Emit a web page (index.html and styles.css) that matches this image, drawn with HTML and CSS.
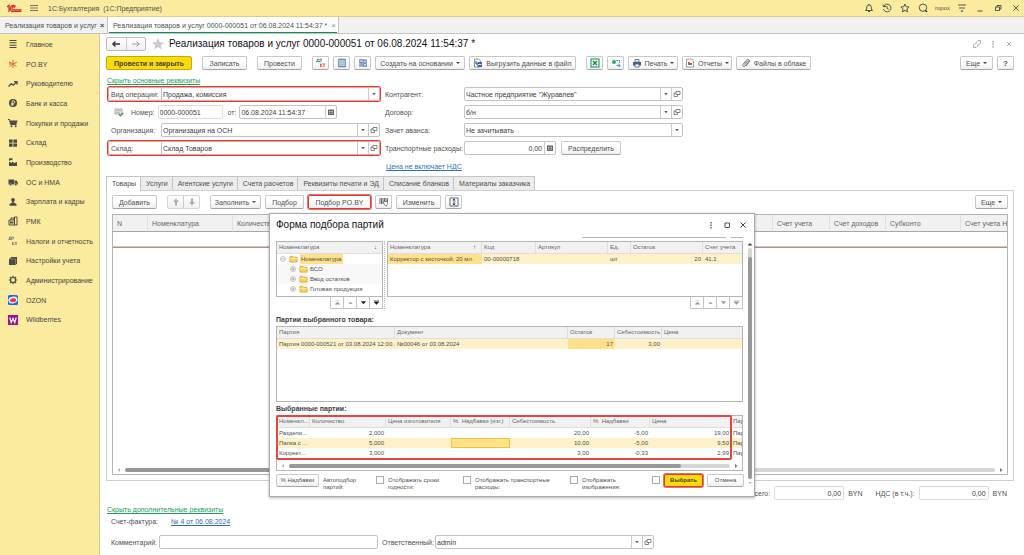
FILE: index.html
```html
<!DOCTYPE html>
<html lang="ru">
<head>
<meta charset="utf-8">
<title>1С:Бухгалтерия</title>
<link rel="stylesheet" href="styles.css">
</head>
<body>
<svg class="defs" aria-hidden="true">
  <symbol id="open" viewBox="0 0 8 8"><path d="M3 1.500h4v3H3zM3 3H1v3.500h3.500V4.500" fill="none" stroke="#666" stroke-width=".8"/></symbol>
  <symbol id="down" viewBox="0 0 8 8"><path d="M2.300 3h3.400L4 5.200z" fill="#555"/></symbol>
  <symbol id="cal" viewBox="0 0 8 8"><path d="M1 1.500h6V7H1z" fill="#666"/><path d="M2 3.500h4M2 5.200h4" stroke="#fff" stroke-width=".7" stroke-dasharray="1 .5"/></symbol>
  <symbol id="folder" viewBox="0 0 10 9"><path d="M1 1.500h3l1 1h4V8H1z" fill="#ffd35c" stroke="#d79b26" stroke-width=".8"/><path d="M1.500 4h7" stroke="#fff0b0" stroke-width="1"/></symbol>
  <symbol id="plus" viewBox="0 0 8 8"><circle cx="4" cy="4" r="2.500" fill="#fff" stroke="#aaa" stroke-width=".7"/><path d="M2.500 4h3M4 2.500v3" stroke="#888" stroke-width=".7"/></symbol>
  <symbol id="minus" viewBox="0 0 8 8"><circle cx="4" cy="4" r="2.500" fill="#fff" stroke="#aaa" stroke-width=".7"/><path d="M2.500 4h3" stroke="#888" stroke-width=".7"/></symbol>
  <symbol id="first" viewBox="0 0 8 8"><path d="M1.500 2h5M1.500 6L4 3.500 6.500 6z" fill="currentColor" stroke="currentColor" stroke-width=".6"/></symbol>
  <symbol id="up" viewBox="0 0 8 8"><path d="M1.500 5.500L4 3l2.500 2.500z" fill="currentColor"/></symbol>
  <symbol id="next" viewBox="0 0 8 8"><path d="M1 2.500h6L4 6z" fill="currentColor"/></symbol>
  <symbol id="last" viewBox="0 0 8 8"><path d="M1 2.200h6M1.500 3.500h5L4 6.200z" fill="currentColor" stroke="currentColor" stroke-width=".8"/></symbol>
  <symbol id="left" viewBox="0 0 8 8"><path d="M5 2v4L2.500 4z" fill="#bbb"/></symbol>
  <symbol id="right" viewBox="0 0 8 8"><path d="M3 2v4l2.500-2z" fill="currentColor"/></symbol>
</svg>

<header class="topbar">
  <svg class="logo" viewBox="0 0 17 9"><g fill="none" stroke="#dc2f26" stroke-width="1.300"><path d="M1 3l2-1.600V8M9.500 2.500A3 3 0 1 0 8 7.400h7.500M8.800 3.600a1.500 1.500 0 1 0-1 2.200h7.700"/></g></svg>
  <button class="plain" aria-label="Меню"><svg class="ic10" viewBox="0 0 10 10"><path d="M1 2.500h8M1 5h8M1 7.500h8" stroke="#555" stroke-width=".8"/></svg></button>
  <span class="app-name">1С:Бухгалтерия&nbsp; (1С:Предприятие)</span>
  <nav class="top-icons">
    <button class="plain" aria-label="Уведомления"><svg class="ic10" viewBox="0 0 10 10"><path d="M1.500 7.500h7L7.300 6V4.200a2.300 2.300 0 0 0-4.600 0V6zM4 8.500h2M5 1v1" fill="none" stroke="#444" stroke-width=".9"/></svg></button>
    <button class="plain" aria-label="История"><svg class="ic10" viewBox="0 0 10 10"><path d="M1.700 3.500A3.800 3.800 0 1 1 1.500 6M1 1.500l.6 2.200L4 3.500M5 3v2.300l1.700 1" fill="none" stroke="#444" stroke-width=".9"/></svg></button>
    <button class="plain" aria-label="Избранное"><svg class="ic10" viewBox="0 0 10 10"><path d="M5 1l1.200 2.700 2.900.3-2.200 2 .7 2.900L5 7.400 2.400 8.900 3.100 6 .9 4l2.900-.3z" fill="none" stroke="#444" stroke-width=".9"/></svg></button>
    <button class="plain" aria-label="Поиск"><svg class="ic10" viewBox="0 0 10 10"><circle cx="5" cy="4.700" r="3.700" fill="none" stroke="#444" stroke-width=".9"/><path d="M7.200 7.200L9 9" stroke="#333" stroke-width="1.400"/></svg></button>
    <span class="user">ropox</span>
    <button class="plain" aria-label="Настройки"><svg class="ic10" viewBox="0 0 10 10"><path d="M1 2h8M2 5h6" stroke="#444" stroke-width=".9"/><path d="M3.500 7.500h3L5 9.200z" fill="#444"/></svg></button>
    <button class="plain" aria-label="Свернуть"><svg class="ic10" viewBox="0 0 10 10"><path d="M2.500 8h5" stroke="#444"/></svg></button>
    <button class="plain" aria-label="Восстановить"><svg class="ic10" viewBox="0 0 10 10"><path d="M2.500 4h4v3.500h-4zM4 4V2.500h4V6H6.500" fill="none" stroke="#444" stroke-width=".9"/></svg></button>
    <button class="plain" aria-label="Закрыть"><svg class="ic10" viewBox="0 0 10 10"><path d="M2.500 2.500l5 5m0-5l-5 5" stroke="#444" stroke-width=".9"/></svg></button>
  </nav>
</header>

<div class="open-tabs">
  <button class="wtab first">Реализация товаров и услуг <b>×</b></button>
  <button class="wtab active"><span>Реализация товаров и услуг 0000-000051 от 06.08.2024 11:54:37 * <i>×</i></span></button>
</div>

<div class="body">
<nav class="sidebar">
  <a href="#"><svg viewBox="0 0 10 10"><path d="M1.500 1.500h7M1.500 3.800h7M1.500 6.200h7M1.500 8.500h7" stroke="#4a4a4a" stroke-width="1.100"/></svg>Главное</a>
  <a href="#"><svg viewBox="0 0 10 10"><path d="M5 1v3M5 6v3M1 3l3 1.500M6 4.500L9 3M1.500 7.500L4 5.800M6 5.800l2.500 1.700M1 5h2" stroke="#e8602c" stroke-width="1"/><circle cx="5" cy="5" r="1" fill="#e8402c"/></svg>PO.BY</a>
  <a href="#"><svg viewBox="0 0 10 10"><path d="M.5 7.500l2.800-2.800 2 1.500L8.500 3M6 2.600h3v3" fill="none" stroke="#4a4a4a" stroke-width="1.300"/></svg>Руководителю</a>
  <a href="#"><svg viewBox="0 0 10 10"><circle cx="5" cy="5" r="4" fill="#4a4a4a"/><path d="M4.200 8V2.800h1.300a1.200 1.200 0 0 1 0 2.600H3.200M3.200 6.600h2.500" fill="none" stroke="#fbeb9e" stroke-width=".9"/></svg>Банк и касса</a>
  <a href="#"><svg viewBox="0 0 10 10"><path d="M0 1.500h1.500l1 5H8.500" fill="none" stroke="#4a4a4a"/><path d="M2 2.500h7.500L8.500 6h-6z" fill="#4a4a4a"/><circle cx="3.500" cy="8.300" r="1" fill="#4a4a4a"/><circle cx="7.700" cy="8.300" r="1" fill="#4a4a4a"/></svg>Покупки и продажи</a>
  <a href="#"><svg viewBox="0 0 10 10"><path d="M1 1.500h3.600v3.200H1zM5.400 1.500H9v3.200H5.400zM1 5.500h3.600v3.200H1zM5.400 5.500H9v3.200H5.400z" fill="#4a4a4a"/></svg>Склад</a>
  <a href="#"><svg viewBox="0 0 10 10"><path d="M1 9V4.500L4 6V4.500L6.500 6 9 5v4zM1 1.300h3.500v1.500L1 3.800z" fill="#4a4a4a"/></svg>Производство</a>
  <a href="#"><svg viewBox="0 0 10 10"><path d="M.5 2.500H6v5H.5zM6.500 3.500h2l1.300 2v2H6.500z" fill="#4a4a4a"/><circle cx="2.500" cy="7.700" r="1.100" fill="#4a4a4a" stroke="#fbeb9e" stroke-width=".4"/><circle cx="7.800" cy="7.700" r="1.100" fill="#4a4a4a" stroke="#fbeb9e" stroke-width=".4"/></svg>ОС и НМА</a>
  <a href="#"><svg viewBox="0 0 10 10"><circle cx="5" cy="2.800" r="1.900" fill="#4a4a4a"/><path d="M4.200 4h1.600v1.500L8.500 7v1.800h-7V7l2.700-1.500z" fill="#4a4a4a"/></svg>Зарплата и кадры</a>
  <a href="#"><svg viewBox="0 0 10 10"><path d="M1 4h5.500v5H1zM3 4V2h3v2M6.500 5V1H9v8H6.500" fill="none" stroke="#4a4a4a"/><path d="M2 5.500h3.500v2H2z" fill="#4a4a4a"/></svg>РМК</a>
  <a href="#"><svg viewBox="0 0 10 10"><path d="M.8 4V3.300h3V4M1.500 3V1h1.800v2M4 1.300h2M5 1.300v2M4.500 6v3M6.500 6L5 7.500 6.500 9M7 6.800h2M8 6.800V9" fill="none" stroke="#666" stroke-width=".8"/></svg>Налоги и отчетность</a>
  <a href="#"><svg viewBox="0 0 10 10"><path d="M3.500 1H9v6.500L7.500 9H1V3z" fill="#4a4a4a"/><path d="M1.500 3h6v5.500" fill="none" stroke="#bfb27a" stroke-width=".5"/></svg>Настройки учета</a>
  <a href="#"><svg viewBox="0 0 10 10"><circle cx="5" cy="5" r="2.500" fill="none" stroke="#4a4a4a" stroke-width="1.200"/><path d="M5 .8v1.700M5 7.500v1.700M.8 5h1.700M7.500 5h1.700M2 2l1.200 1.200M6.800 6.800L8 8M8 2L6.800 3.200M3.200 6.800L2 8" stroke="#4a4a4a" stroke-width="1.200"/></svg>Администрирование</a>
  <a href="#"><svg viewBox="0 0 10 10"><rect width="10" height="10" rx="1.500" fill="#1769ef"/><ellipse cx="5" cy="5" rx="4.600" ry="3.300" fill="#fff" transform="rotate(-15 5 5)"/><ellipse cx="5" cy="5.200" rx="3.200" ry="2" fill="#ee3a3d" transform="rotate(-10 5 5)"/></svg>OZON</a>
  <a href="#"><svg viewBox="0 0 10 10"><rect width="10" height="10" fill="#97158f"/><path d="M1.800 2.500l1.400 5L5 3.500l1.800 4 1.400-5" fill="none" stroke="#fff" stroke-width="1.200"/></svg>Wildberries</a>
</nav>

<main class="main">
  <div class="title-row">
    <div class="split"><button aria-label="Назад"><svg class="ic10" viewBox="0 0 10 10"><path d="M1.500 5H9M4.500 2.500L1.800 5l2.700 2.500" fill="none" stroke="#333" stroke-width="1.300"/></svg></button><button aria-label="Вперед"><svg class="ic10" viewBox="0 0 10 10"><path d="M1 5h7.500M5.500 2.500L8.200 5 5.500 7.500" fill="none" stroke="#999" stroke-width="1"/></svg></button></div>
    <svg class="star" viewBox="0 0 12 12"><path d="M6 0l1.600 4.100 4.400.3-3.400 2.800 1.100 4.300L6 9.100l-3.700 2.400 1.100-4.300L0 4.400l4.400-.3z" fill="#c9c9c9"/></svg>
    <h1>Реализация товаров и услуг 0000-000051 от 06.08.2024 11:54:37 *</h1>
    <div class="title-tools">
      <svg class="ic10" viewBox="0 0 10 10"><path d="M4 3.500L6 1.500h2.500V4l-2 2H5M6 6.500l-2 2H1.500V6l2-2H5" fill="none" stroke="#999" stroke-width=".8"/></svg>
      <svg class="ic10" viewBox="0 0 10 10"><path d="M5 2v1.500M5 4.500V6M5 7v1.500" stroke="#888" stroke-width="1.200"/></svg>
      <svg class="ic10" viewBox="0 0 10 10"><path d="M3 3l4 4m0-4L3 7" stroke="#999" stroke-width=".8"/></svg>
    </div>
  </div>

  <div class="toolbar">
    <button class="btn primary w86">Провести и закрыть</button>
    <button class="btn w45">Записать</button>
    <button class="btn w45">Провести</button>
    <div class="group">
      <button class="btn sq" aria-label="Дт/Кт"><svg class="ic10" viewBox="0 0 10 10"><path d="M.5 4.500v-1h3.300v1M1.300 3.300V1.200h1.800v2.100M4 1.200h2M5 1.200v3" fill="none" stroke="#1f9a5b" stroke-width=".8"/><path d="M4.500 5.500V9M6.500 5.500L5 7.200 6.500 9M7 6h2M8 6v3" fill="none" stroke="#e0433a" stroke-width=".8"/></svg></button>
      <button class="btn sq" aria-label="Реестр"><svg class="ic10" viewBox="0 0 10 10"><path d="M1.500 1h7v8h-7z" fill="#7f9dc9" stroke="#5b79a8" stroke-width=".6"/><path d="M2 3h6M2 5h6M2 7h6" stroke="#fff" stroke-width=".8"/></svg></button>
      <button class="btn sq" aria-label="Структура"><svg class="ic10" viewBox="0 0 10 10"><path d="M1 1h8v8H1z" fill="#9bb3d4"/><path d="M2 2h3v2.500H2zM5.500 5.500h2.800V8H5.500zM3.500 4.500v2.500h2" fill="#dfe8f4" stroke="#4a6a9a" stroke-width=".6"/></svg></button>
    </div>
    <button class="btn w90 near">Создать на основании <em></em></button>
    <button class="btn w107 near"><svg class="ic10" viewBox="0 0 10 10"><path d="M1.500 1h4l2 2v6h-6z" fill="#fff" stroke="#666" stroke-width=".7"/><path d="M4.500 4h4.500v5H4.500z" fill="#376aa8"/><path d="M3 3v3h3" fill="none" stroke="#27466d"/><path d="M5 6.500h3.500" stroke="#fff" stroke-width=".8"/></svg>Выгрузить данные в файл</button>
    <div class="group">
      <button class="btn sq" aria-label="Excel"><svg class="ic10" viewBox="0 0 10 10"><rect x="1" y="1" width="8" height="8" fill="#fff" stroke="#27a065" stroke-width="1.200"/><path d="M3 3l4 4m0-4L3 7" stroke="#167f48" stroke-width="1.400"/></svg></button>
      <button class="btn sq" aria-label="Обмен"><svg class="ic10" viewBox="0 0 10 10"><circle cx="3" cy="4" r="2" fill="#26a869"/><path d="M5.500 2.500h3V5M9 7.500H5" fill="none" stroke="#3d83ce" stroke-width="1.200" stroke-dasharray="1.500 .5"/><path d="M7.500 5.500v4L9.700 7.500z" fill="#3d83ce"/></svg></button>
      <button class="btn w50"><svg class="ic10" viewBox="0 0 10 10"><path d="M3 1.500h4V4H3z" fill="#fff" stroke="#47617f" stroke-width=".8"/><path d="M1 4h8v3.500H1z" fill="#47617f"/><path d="M3 6h4v3H3z" fill="#fff" stroke="#47617f" stroke-width=".8"/></svg>Печать <em></em></button>
      <button class="btn w50"><svg class="ic10" viewBox="0 0 10 10"><path d="M1.500 1h5l2 2v6h-7z" fill="#fff" stroke="#777" stroke-width=".7"/><path d="M3 4h2v3H3z" fill="#e04b3f"/><path d="M5 5h2v2H5z" fill="#27a065"/></svg>Отчеты <em></em></button>
      <button class="btn w75"><svg class="ic10" viewBox="0 0 10 10"><path d="M3.500 6.500l3-3.500c.8-.8 1.600 0 1 .8L4 8C2.800 9.200 1 8 2 6.500L5.500 2C7 .5 9.500 2 8.200 4L5 8" fill="none" stroke="#555" stroke-width=".8"/></svg>Файлы в облаке</button>
    </div>
    <div class="group end">
      <button class="btn w33">Еще <em></em></button>
      <button class="btn sq q">?</button>
    </div>
  </div>

  <a class="green toggle" href="#">Скрыть основные реквизиты</a>

  <form class="form">
    <div class="col-l">
      <div class="frow hot"><label for="op">Вид операции:</label><div class="field"><input id="op" value="Продажа, комиссия"><button type="button" aria-label="Выбрать"><svg><use href="#down"/></svg></button></div></div>
      <div class="frow num">
        <svg class="ic10" viewBox="0 0 10 10"><path d="M1 2h7v5H1z" fill="#eee" stroke="#888" stroke-width=".7"/><path d="M2 3.700h5M2 5.300h4" stroke="#888" stroke-width=".6"/><path d="M5 7l1.500 1.800L9.300 6" fill="none" stroke="#27a045" stroke-width="1.200"/></svg>
        <label for="num">Номер:</label><div class="field soft w65"><input id="num" value="0000-000051"></div>
        <label for="date">от:</label><div class="field w98"><input id="date" value="06.08.2024 11:54:37"><button type="button" aria-label="Календарь"><svg><use href="#cal"/></svg></button></div>
      </div>
      <div class="frow"><label for="org">Организация:</label><div class="field"><input id="org" value="Организация на ОСН"><button type="button" aria-label="Выбрать"><svg><use href="#down"/></svg></button><button type="button" aria-label="Открыть"><svg><use href="#open"/></svg></button></div></div>
      <div class="frow hot"><label for="wh">Склад:</label><div class="field"><input id="wh" value="Склад Товаров"><button type="button" aria-label="Выбрать"><svg><use href="#down"/></svg></button><button type="button" aria-label="Открыть"><svg><use href="#open"/></svg></button></div></div>
    </div>
    <div class="col-r">
      <div class="frow"><label for="kon">Контрагент:</label><div class="field"><input id="kon" value="Частное предприятие &quot;Журавлев&quot;"><button type="button" aria-label="Выбрать"><svg><use href="#down"/></svg></button><button type="button" aria-label="Открыть"><svg><use href="#open"/></svg></button></div></div>
      <div class="frow"><label for="dog">Договор:</label><div class="field"><input id="dog" value="б/н"><button type="button" aria-label="Выбрать"><svg><use href="#down"/></svg></button><button type="button" aria-label="Открыть"><svg><use href="#open"/></svg></button></div></div>
      <div class="frow"><label for="av">Зачет аванса:</label><div class="field"><input id="av" value="Не зачитывать"><button type="button" aria-label="Выбрать"><svg><use href="#down"/></svg></button></div></div>
      <div class="frow"><label for="tr">Транспортные расходы:</label><div class="field w92"><input id="tr" class="r" value="0,00"><button type="button" aria-label="Калькулятор"><svg><use href="#cal"/></svg></button></div><button type="button" class="btn w60">Распределить</button></div>
    </div>
  </form>
  <a class="blue price" href="#">Цена не включает НДС</a>

  <div class="tabs" role="tablist">
    <button role="tab" class="on">Товары</button><button role="tab">Услуги</button><button role="tab">Агентские услуги</button><button role="tab">Счета расчетов</button><button role="tab">Реквизиты печати и ЭД</button><button role="tab">Списание бланков</button><button role="tab">Материалы заказчика</button>
  </div>
  <section class="panel">
    <div class="toolbar inner">
      <button class="btn w45">Добавить</button>
      <div class="split pale"><button aria-label="Вверх"><svg class="ic10" viewBox="0 0 10 10"><path d="M5 1.500L8 5H6v3.500H4V5H2z" fill="#a5afb8"/></svg></button><button aria-label="Вниз"><svg class="ic10" viewBox="0 0 10 10"><path d="M5 8.500L2 5h2V1.500h2V5h2z" fill="#a5afb8"/></svg></button></div>
      <div class="group">
        <button class="btn w51">Заполнить <em></em></button>
        <button class="btn w39">Подбор</button>
        <button class="btn w63 redbox">Подбор PO.BY</button>
        <button class="btn sq" aria-label="Сканер"><svg class="ic10" viewBox="0 0 10 10"><path d="M1 1v6M2.500 1v6M4 1v6M5.500 1v4M7 1v4M8.500 1v4" stroke="#444" stroke-width=".8"/><path d="M4 5l4.500-1v2.500L7.500 9 6 8.500z" fill="#fff" stroke="#555" stroke-width=".7"/></svg></button>
        <button class="btn w45">Изменить</button>
        <button class="btn sq" aria-label="Высота строк"><svg class="ic10" viewBox="0 0 10 10"><path d="M1 1h8v8H1z" fill="#fff" stroke="#44556b" stroke-width=".9"/><path d="M5 2v6M3.800 3.400L5 2l1.200 1.400M3.800 6.600L5 8l1.200-1.400" fill="none" stroke="#22354d" stroke-width=".9"/></svg></button>
      </div>
      <div class="group end"><button class="btn w33">Еще <em></em></button></div>
    </div>
    <div class="grid-box">
      <table class="grid">
        <colgroup><col class="c35"><col class="c85"><col><col class="c57"><col class="c56"><col class="c75"><col class="c46"></colgroup>
        <thead><tr><th>N</th><th>Номенклатура</th><th>Количество</th><th>Счет учета</th><th>Счет доходов</th><th>Субконто</th><th>Счет учета НДС</th></tr></thead>
        <tbody><tr><td colspan="7"></td></tr></tbody>
      </table>
      <div class="hscroll big"><svg><use href="#left"/></svg><div class="track"><div class="thumb"></div></div><svg><use href="#right"/></svg></div>
    </div>
  </section>

  <div class="totals">
    <label for="t1">Всего:</label><div class="field soft w70"><input id="t1" class="r" value="0,00"></div><span>BYN</span>
    <label for="t2" class="nds">НДС (в т.ч.):</label><div class="field soft w70"><input id="t2" class="r" value="0,00"></div><span>BYN</span>
  </div>
  <a class="green toggle2" href="#">Скрыть дополнительные реквизиты</a>
  <div class="invoice"><span>Счет-фактура:</span><a class="blue" href="#">№ 4 от 06.08.2024</a></div>
  <div class="comment"><label for="cm">Комментарий:</label><div class="field w219"><input id="cm"></div><label for="rs" class="resp">Ответственный:</label><div class="field w219"><input id="rs" value="admin"><button aria-label="Выбрать"><svg><use href="#down"/></svg></button><button aria-label="Открыть"><svg><use href="#open"/></svg></button></div></div>
</main>
</div>

<div class="dialog" role="dialog" aria-labelledby="dt">
  <div class="dlg-head">
    <h2 id="dt">Форма подбора партий</h2>
    <button class="plain" aria-label="Еще"><svg class="ic10" viewBox="0 0 10 10"><path d="M5 2v1.500M5 4.500V6M5 7v1.500" stroke="#444" stroke-width="1.200"/></svg></button>
    <button class="plain" aria-label="Развернуть"><svg class="ic10" viewBox="0 0 10 10"><path d="M3 3h4.500v4.500H3z" fill="none" stroke="#444" stroke-width=".9"/></svg></button>
    <button class="plain" aria-label="Закрыть"><svg class="ic10" viewBox="0 0 10 10"><path d="M2.500 2.500l5 5m0-5l-5 5" stroke="#444"/></svg></button>
  </div>
  <div class="dlg-body">
    <div class="dlg-content">
      <div class="cutoff"><i class="long"></i><i class="short"></i></div>
      <div class="panes">
        <div class="pane tree-pane">
          <div class="list">
            <table><thead><tr><th>Номенклатура<span class="sort">↓</span></th></tr></thead>
            <tbody>
              <tr><td class="t0"><div><svg><use href="#minus"/></svg><svg class="f"><use href="#folder"/></svg><mark>Номенклатура</mark></div></td></tr>
              <tr class="alt"><td class="t1"><div><svg><use href="#plus"/></svg><svg class="f"><use href="#folder"/></svg>БСО</div></td></tr>
              <tr class="alt"><td class="t1"><div><svg><use href="#plus"/></svg><svg class="f"><use href="#folder"/></svg>Ввод остатков</div></td></tr>
              <tr><td class="t1"><div><svg><use href="#plus"/></svg><svg class="f"><use href="#folder"/></svg>Готовая продукция</div></td></tr>
              <tr><td class="t1"><div><svg><use href="#plus"/></svg><svg class="f"><use href="#folder"/></svg></div></td></tr>
            </tbody></table>
          </div>
          <div class="pager"><button disabled aria-label="В начало"><svg><use href="#first"/></svg></button><button disabled aria-label="Вверх"><svg><use href="#up"/></svg></button><button aria-label="Вниз"><svg><use href="#next"/></svg></button><button aria-label="В конец"><svg><use href="#last"/></svg></button></div>
        </div>
        <div class="splitter"></div>
        <div class="pane goods-pane">
          <div class="list">
            <table><colgroup><col class="c94"><col class="c54"><col class="c72"><col class="c23"><col class="c72"><col></colgroup>
            <thead><tr><th>Номенклатура<span class="sort">↑</span></th><th>Код</th><th>Артикул</th><th>Ед.</th><th>Остаток</th><th>Счет учета</th></tr></thead>
            <tbody><tr class="sel"><td class="cur">Корректор с кисточкой, 20 мл.</td><td>00-00000718</td><td></td><td>шт</td><td class="r">20</td><td>41.1</td></tr></tbody></table>
          </div>
          <div class="pager"><button disabled aria-label="В начало"><svg><use href="#first"/></svg></button><button disabled aria-label="Вверх"><svg><use href="#up"/></svg></button><button disabled aria-label="Вниз"><svg><use href="#next"/></svg></button><button disabled aria-label="В конец"><svg><use href="#last"/></svg></button></div>
        </div>
      </div>
      <h3>Партии выбранного товара:</h3>
      <div class="list parts">
        <table><colgroup><col class="c118"><col class="c173"><col class="c47"><col class="c47"><col></colgroup>
        <thead><tr><th>Партия</th><th>Документ</th><th>Остаток</th><th>Себестоимость</th><th>Цена</th></tr></thead>
        <tbody><tr class="sel"><td>Партия 0000-000521 от 03.08.2024 12:00...</td><td>№00046 от 03.08.2024</td><td class="r cur">17</td><td class="r">3,00</td><td></td></tr></tbody></table>
      </div>
      <h3>Выбранные партии:</h3>
      <div class="list chosen">
        <table><colgroup><col class="c33"><col class="c76"><col class="c65"><col class="c59"><col class="c81"><col class="c59"><col class="c81"><col></colgroup>
        <thead><tr><th>Номенкл...</th><th>Количество</th><th>Цена изготовителя</th><th>%&nbsp; Надбавки (изг.)</th><th>Себестоимость</th><th>%&nbsp; Надбавки</th><th>Цена</th><th>Пар</th></tr></thead>
        <tbody>
          <tr><td>Раздели...</td><td class="r">2,000</td><td></td><td></td><td class="r">20,00</td><td class="r">-5,00</td><td class="r">19,00</td><td>Пар</td></tr>
          <tr class="sel"><td>Папка с ...</td><td class="r">5,000</td><td></td><td class="edit"></td><td class="r">10,00</td><td class="r">-5,00</td><td class="r">9,50</td><td>Пар</td></tr>
          <tr><td>Коррект...</td><td class="r">3,000</td><td></td><td></td><td class="r">3,00</td><td class="r">-0,33</td><td class="r">2,99</td><td>Пар</td></tr>
        </tbody></table>
        <div class="hscroll"><svg><use href="#left"/></svg><div class="track"><div class="thumb"></div></div><svg><use href="#right"/></svg></div>
        <div class="frame"></div>
      </div>
      <div class="dlg-foot">
        <button class="btn w43">% Надбавки</button>
        <label class="l49" for="k1">Автоподбор партий:</label><input type="checkbox" id="k1">
        <label class="l71" for="k2">Отображать сроки годности:</label><input type="checkbox" id="k2">
        <label class="l91" for="k3">Отображать транспортные расходы:</label><input type="checkbox" id="k3">
        <label class="l66" for="k4">Отображать изображения:</label><input type="checkbox" id="k4">
        <button class="btn primary redbox w39">Выбрать</button>
        <button class="btn w37">Отмена</button>
      </div>
    </div>
    <div class="vscroll"><svg><use href="#up"/></svg><div class="vtrack"><div class="vthumb"></div></div><svg class="dim"><use href="#down"/></svg></div>
  </div>
</div>
</body>
</html>
```
FILE: styles.css
```css
* { box-sizing: border-box; }
html, body { height: 100%; }
body {
  margin: 0;
  display: flex;
  flex-direction: column;
  background: #fff;
  color: #4f4f4f;
  font: 7px/9px "Liberation Sans", Arial, sans-serif;
  overflow: hidden;
}
button, input { font: inherit; color: inherit; margin: 0; }
button { cursor: pointer; white-space: nowrap; }
svg { display: block; flex: none; }
h1, h2, h3 { margin: 0; font-weight: normal; color: #111; }
.defs { position: absolute; width: 0; height: 0; }
.ic10 { width: 10px; height: 10px; }
.plain { border: 0; background: none; padding: 0; }

/* Top bar */
.topbar {
  flex: none;
  height: 17px;
  display: flex;
  align-items: center;
  padding: 0 3px 0 6px;
  background: #fbeb9e;
  border-bottom: 1px solid #d9cd90;
}
.logo { width: 17px; height: 9px; margin-right: 6px; }
.app-name { margin-left: 9px; }
.top-icons { margin-left: auto; display: flex; align-items: center; gap: 8px; }
.top-icons .user { font-size: 6px; margin: 0 -1px; }

.open-tabs {
  flex: none;
  height: 17px;
  display: flex;
  background: #f1f1f1;
  border-bottom: 1px solid #c4c4c4;
}
.wtab { border: 0; border-right: 1px solid #c4c4c4; background: none; padding: 0 4px 0 5px; text-align: left; }
.wtab.first { width: 108px; }
.wtab.active { background: #fff; padding: 0 1px; }
.wtab span { display: block; padding: 3px 1px 2px 4px; border-bottom: 1px solid #0a9150; }
.wtab i { font-style: normal; color: #888; margin-left: 2px; font-size: 8px; }
.wtab b { margin-left: 1px; font-size: 8px; }

.body { flex: 1; min-height: 0; display: flex; }

/* Sidebar */
.sidebar {
  flex: none;
  width: 100px;
  background: #fbeb9e;
  border-right: 1px solid #d5cb9a;
}
.sidebar a {
  display: flex;
  align-items: center;
  gap: 8px;
  height: 20px;
  padding-left: 8px;
  color: #444;
  text-decoration: none;
  white-space: nowrap;
}
.sidebar a:nth-child(3n) { height: 19px; }
.sidebar svg { width: 10px; height: 10px; }

/* Document */
.main {
  flex: 1;
  min-width: 0;
  display: flex;
  flex-direction: column;
  padding: 3px 10px 6px 6px;
}
.title-row { display: flex; align-items: center; height: 14px; }
.split { display: flex; width: 40px; height: 14px; border: 1px solid #bbb; border-radius: 2px; background: linear-gradient(#fff, #f0f0f0); }
.split button { flex: 1; border: 0; background: none; padding: 0; display: flex; align-items: center; justify-content: center; }
.split button + button { border-left: 1px solid #ccc; }
.split.pale { width: 33px; border-color: #d5d5d5; }
.star { width: 12px; height: 12px; margin: 0 5px 0 6px; }
h1 { font-size: 10px; line-height: 12px; white-space: nowrap; }
.title-tools { margin-left: auto; display: flex; gap: 6px; }

.toolbar { display: flex; gap: 10px; margin-top: 5px; height: 14px; }
.toolbar.inner { margin-top: 0; }
.group { display: flex; gap: 4px; }
.end { margin-left: auto; }
.near { margin-left: -6px; }
.btn {
  flex: none;
  height: 14px;
  display: flex;
  align-items: center;
  justify-content: center;
  gap: 3px;
  padding: 0;
  border: 1px solid #c8c8c8;
  border-bottom-color: #a5a5a5;
  border-radius: 2px;
  background: linear-gradient(#fff 40%, #efefef);
}
.btn em { border: 2px solid transparent; border-top-color: #444; border-bottom-width: 0; }
.btn.primary { background: #f8dc0c; border-color: #c8a800; font-weight: bold; color: #4a4020; }
.btn.sq { width: 17px; }
.btn.q { font-weight: bold; font-size: 8px; }
.btn.redbox { border: 1px solid #e23a33; box-shadow: 0 0 0 1px #e8726c; }
.w33 { width: 33px; } .w37 { width: 37px; } .w39 { width: 39px; } .w43 { width: 43px; }
.w45 { width: 45px; } .w50 { width: 50px; } .w51 { width: 51px; } .w60 { width: 60px; }
.w63 { width: 63px; } .w75 { width: 75px; } .w86 { width: 86px; } .w90 { width: 90px; } .w107 { width: 107px; }

a.green { color: #17a05a; }
a.blue { color: #2d6fb5; }
.toggle { align-self: flex-start; margin: 6px 0 2px 1px; }

.form { display: flex; gap: 5px; padding-left: 2px; }
.col-l, .col-r { display: flex; flex-direction: column; gap: 4px; }
.col-l { width: 272px; }
.col-r { width: 298px; }
.frow { display: flex; align-items: center; height: 14px; }
.frow label { flex: none; white-space: nowrap; }
.col-l .frow > label:first-child { width: 53px; padding-left: 3px; }
.col-r .frow > label { width: 79px; }
.frow.hot { box-shadow: 0 0 0 1px #e23a33, inset 0 0 0 1px #f0a09b; border-radius: 2px; }
.frow.hot .field { border-color: #f0a09b; border-left-color: #bdbdbd; }
.frow.num { gap: 3px; padding-left: 6px; }
.frow.num label { margin-left: 4px; }
.frow.num .field + label { margin-left: 2px; }
.frow .btn { margin-left: 5px; }
.field {
  flex: 1;
  min-width: 0;
  height: 14px;
  display: flex;
  border: 1px solid #c2c2c2;
  border-radius: 2px;
  background: #fff;
}
.field.soft { border-color: #dcdcdc; }
.field input { flex: 1; min-width: 0; width: 0; border: 0; padding: 0 1px; background: none; outline: 0; color: #3c3c3c; }
.field input.r { text-align: right; padding-right: 2px; }
.field button { flex: none; width: 11px; border: 0; border-left: 1px solid #ccc; background: none; padding: 0; display: flex; align-items: center; justify-content: center; }
.field svg { width: 8px; height: 8px; }
.field.w65, .field.w98, .field.w92, .field.w70, .field.w219 { flex: none; }
.w65 { width: 65px; } .w98 { width: 98px; } .w92 { width: 92px; } .w70 { width: 70px; } .w219 { width: 219px; }
.price { align-self: flex-start; margin: 7px 0 5px 280px; }

.tabs { display: flex; height: 14px; }
.tabs button { border: 1px solid #c4c4c4; border-left-width: 0; border-bottom: 0; background: #ececec; padding: 0 4px 0 5px; }
.tabs .on { background: #fff; border-left-width: 1px; position: relative; height: 15px; padding-bottom: 1px; }
.panel { flex: 1; min-height: 0; display: flex; flex-direction: column; gap: 5px; padding: 4px 5px 5px; border: 1px solid #cfcfcf; }
.grid-box { flex: 1; min-height: 0; border: 1px solid #b5b5b5; display: flex; flex-direction: column; justify-content: space-between; overflow: hidden; }
table { border-collapse: separate; border-spacing: 0; table-layout: fixed; width: 100%; }
th, td { font-weight: normal; text-align: left; overflow: hidden; white-space: nowrap; }
.grid th { height: 17px; padding: 0 4px; background: #f1f1f1; border-right: 1px solid #e0e0e0; border-bottom: 1px solid #a8a8a8; color: #666; }
.grid th:last-child { border-right: 0; }
.grid td { height: 16px; border-bottom: 1px solid #999; box-shadow: inset 0 -1px #f5b5b0; }
.c35 { width: 35px; } .c85 { width: 85px; } .c57 { width: 57px; } .c56 { width: 56px; } .c75 { width: 75px; } .c46 { width: 46px; }

.hscroll { display: flex; align-items: center; height: 8px; padding: 0 2px; color: #777; }
.hscroll svg { width: 8px; height: 8px; }
.track { flex: 1; height: 4px; border-radius: 2px; background: #d6d6d6; margin: 0 2px; }
.thumb { width: 89%; height: 100%; border-radius: 2px; background: #989898; }
.hscroll.big .thumb { width: 70%; }

.totals { display: flex; justify-content: flex-end; align-items: center; gap: 4px; margin: 5px 7px 0 0; height: 14px; }
.totals .nds { margin-left: 9px; }
.toggle2 { align-self: flex-start; margin: 5px 0 3px 1px; }
.invoice { display: flex; padding-left: 5px; height: 9px; }
.invoice span { width: 60px; }
.comment { display: flex; align-items: center; margin-top: 9px; padding-left: 5px; height: 14px; }
.comment label { width: 48px; }
.comment .resp { width: 53px; margin-left: 4px; }

/* Batch selection window */
.dialog {
  position: absolute;
  left: 269px;
  top: 213px;
  width: 486px;
  height: 284px;
  display: flex;
  flex-direction: column;
  background: #fff;
  border: 1px solid #aaa;
  box-shadow: 0 1px 3px rgba(0, 0, 0, .3);
  font-size: 6px;
  line-height: 7px;
}
.dlg-head { display: flex; align-items: center; gap: 6px; height: 22px; padding: 0 6px; }
h2 { font-size: 10px; line-height: 12px; margin-right: auto; }
.dlg-body { flex: 1; display: flex; min-height: 0; }
.dlg-content { flex: 1; min-width: 0; padding: 0 3px 0 6px; }
.cutoff { display: flex; justify-content: flex-end; gap: 5px; height: 5px; }
.cutoff i { height: 2px; border-bottom: 1px solid #b5b5b5; }
.cutoff .long { width: 144px; }
.cutoff .short { width: 12px; }
.panes { display: flex; }
.tree-pane { width: 107px; }
.goods-pane { flex: 1; min-width: 0; }
.splitter { width: 0; margin: 0 2px 0 1px; border-left: 1px dotted #bbb; }
.list { border: 1px solid #b5b5b5; overflow: hidden; }
.pane .list { height: 56px; }
.list th { height: 12px; padding: 0 0 0 2px; background: #f1f1f1; border-right: 1px solid #dedede; border-bottom: 1px solid #dedede; color: #666; }
.list th:last-child { border-right: 0; }
.list td { height: 10px; padding: 0 0 0 2px; }
.list td.r { text-align: right; padding-right: 2px; }
.sort { float: right; margin-right: 5px; color: #333; }
.sel td { background: #fdf1c9; }
.sel td.cur { background: #ffe18a; }
.sel td.edit { background: #ffe18a; box-shadow: inset 0 0 0 1px #f0c52e; }
.list td div { display: flex; align-items: center; gap: 2px; height: 10px; }
.list td svg { width: 8px; height: 8px; }
.list td svg.f { width: 9px; height: 8px; }
.list td.t1 { padding-left: 12px; }
.alt td { background: #f8f8f8; }
mark { background: #ffe18a; color: inherit; line-height: 10px; padding: 0 2px 0 1px; }
.pager { display: flex; justify-content: flex-end; height: 12px; }
.pager button { width: 13px; border: 1px solid #c4c4c4; border-top: 0; border-left-width: 0; background: #fff; padding: 0; display: flex; align-items: center; justify-content: center; color: #222; }
.pager button:first-child { width: 14px; border-left-width: 1px; }
.pager button:disabled { color: #999; }
.pager svg { width: 7px; height: 7px; }
.c94 { width: 94px; } .c54 { width: 54px; } .c72 { width: 72px; } .c23 { width: 23px; }
.c118 { width: 118px; } .c173 { width: 173px; } .c47 { width: 47px; }
.c33 { width: 33px; } .c76 { width: 76px; } .c65 { width: 65px; } .c59 { width: 59px; } .c81 { width: 81px; }
h3 { font-weight: bold; font-size: 7px; line-height: 9px; color: #3c3c3c; }
.panes + h3 { margin: 6px 0 2px; }
.parts { height: 76px; }
.parts + h3 { margin: 2px 0; }
.chosen { position: relative; height: 56px; display: flex; flex-direction: column; justify-content: space-between; overflow: visible; }
.frame { position: absolute; left: -1px; top: -1px; width: 456px; height: 45px; border: 2px solid #e4453d; border-radius: 2px; }
.dlg-foot { display: flex; align-items: flex-start; gap: 4px; margin-top: 3px; }
.dlg-foot .btn { height: 13px; }
.dlg-foot label { padding-top: 3px; flex: none; }
.l49 { width: 49px; } .l71 { width: 71px; } .l91 { width: 91px; } .l66 { width: 66px; }
.dlg-foot input { flex: none; appearance: none; width: 8px; height: 8px; margin-top: 2px; border: 1px solid #aaa; background: #fff; }
.vscroll { width: 8px; display: flex; flex-direction: column; align-items: center; padding: 4px 0 9px; color: #444; }
.vscroll svg { width: 8px; height: 8px; }
.vscroll .dim { opacity: .4; }
.vtrack { flex: 1; width: 4px; border-radius: 2px; background: #d6d6d6; padding-top: 9px; }
.vthumb { height: 100%; border-radius: 2px; background: #989898; }
```
